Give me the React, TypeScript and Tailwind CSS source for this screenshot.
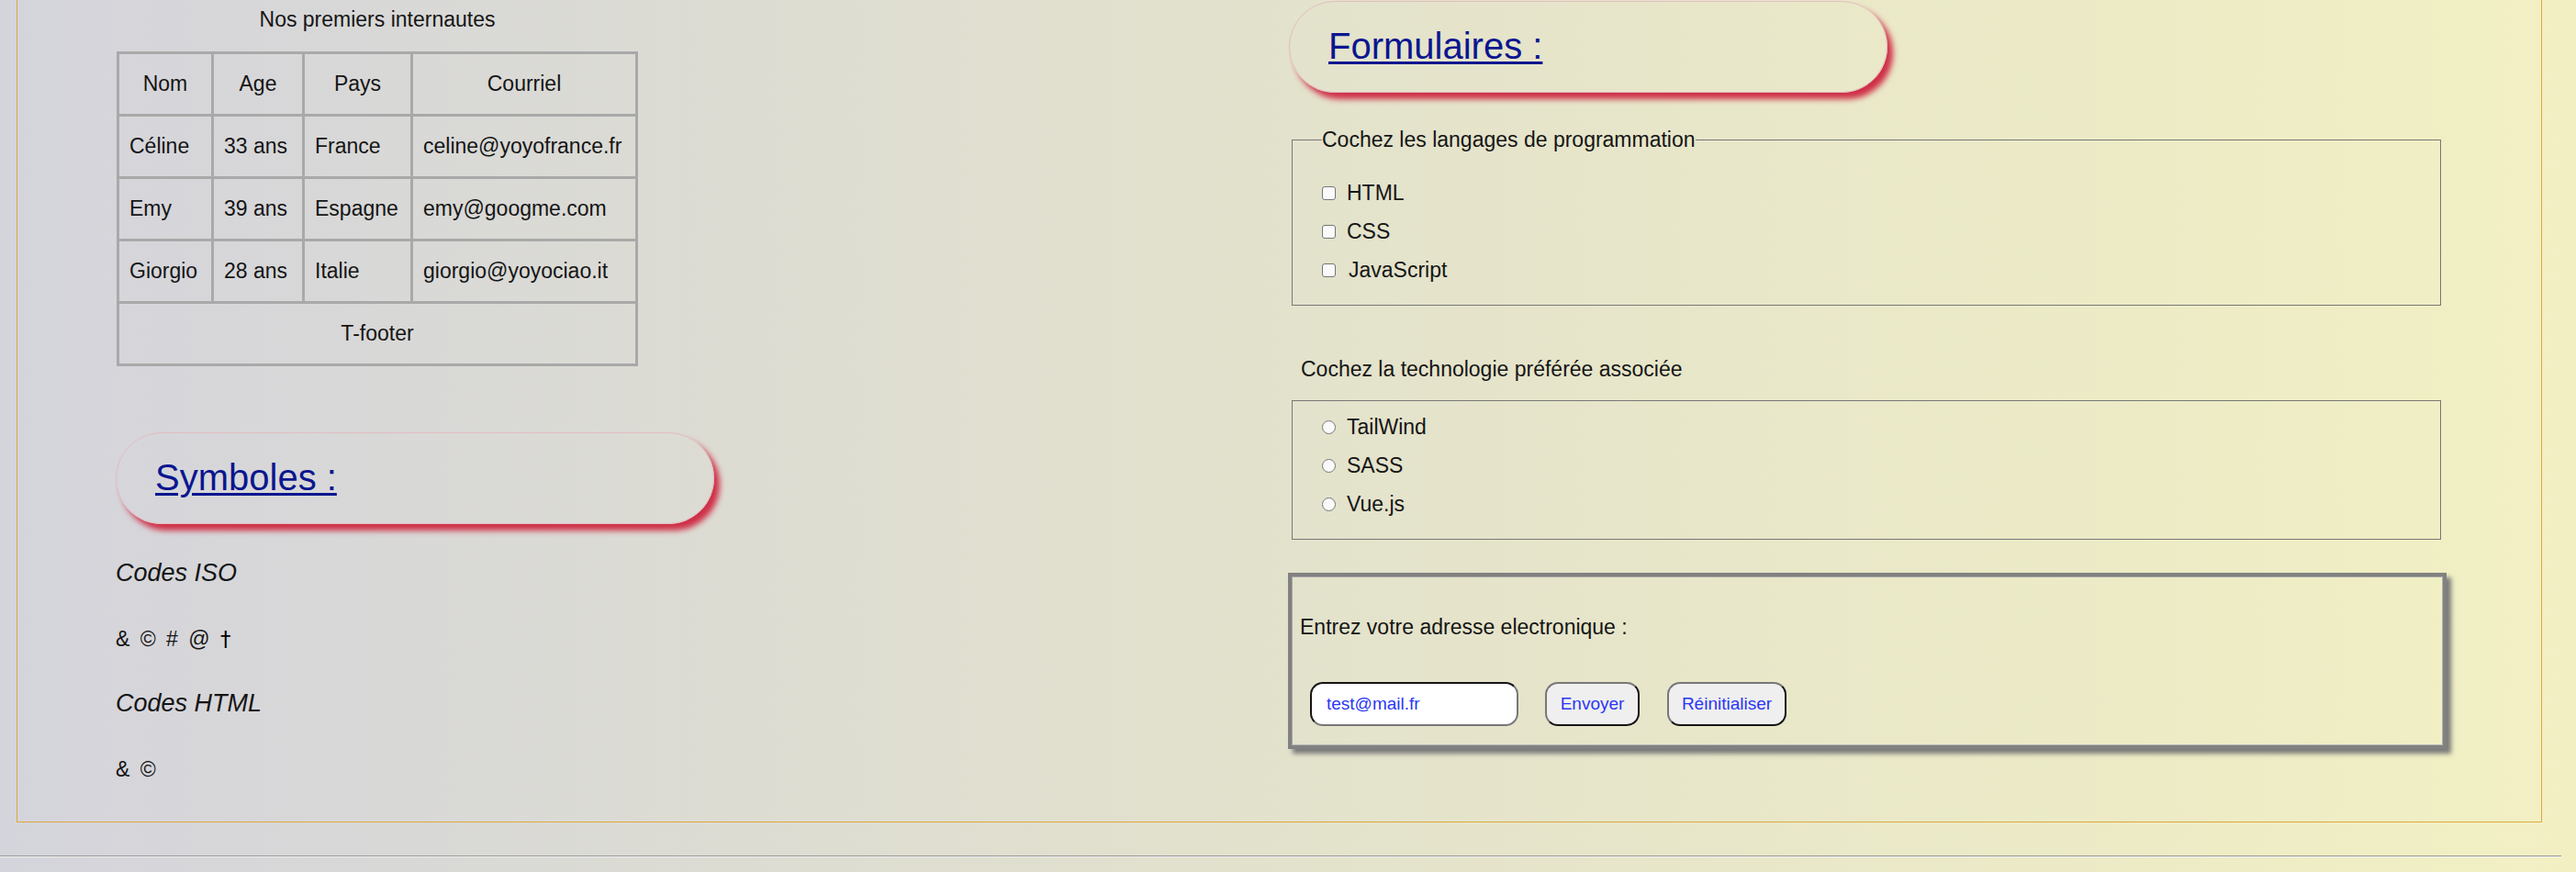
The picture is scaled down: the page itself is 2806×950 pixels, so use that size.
import React from "react";

const Pill = ({ label }: { label: string }) => (
  <div className="w-[652px] h-[100px] rounded-full border border-[#e3bcc1] shadow-[6px_7px_6px_#cf3047] pl-[42px] pt-[28px]">
    <a
      href="#"
      className="block w-max text-[40px] leading-[40px] text-[#0b168f] underline decoration-[3px] underline-offset-[3px]"
    >
      {label}
    </a>
  </div>
);

const Cell = ({
  w,
  children,
  head,
}: {
  w: string;
  children: React.ReactNode;
  head?: boolean;
}) => (
  <div
    className={
      "h-[68px] border-r-[3px] border-b-[3px] border-[#a9a9a9] flex items-center " +
      (head ? "justify-center " : "pl-[11px] ") +
      w
    }
  >
    {children}
  </div>
);

const rows = [
  ["Céline", "33 ans", "France", "celine@yoyofrance.fr"],
  ["Emy", "39 ans", "Espagne", "emy@googme.com"],
  ["Giorgio", "28 ans", "Italie", "giorgio@yoyociao.it"],
];

const widths = ["w-[103px]", "w-[99px]", "w-[118px]", "w-[245px]"];

const Check = ({ label, extra }: { label: string; extra?: string }) => (
  <div className="h-[42px] flex items-center">
    <span className="w-[15px] h-[15px] rounded-[3px] border border-[#767676] bg-[#fafafa] shrink-0" />
    <span className={"ml-[12px] leading-[30px] " + (extra ?? "")}>{label}</span>
  </div>
);

const Radio = ({ label }: { label: string }) => (
  <div className="h-[42px] flex items-center">
    <span className="w-[15px] h-[15px] rounded-full border border-[#767676] bg-[#fafafa] shrink-0" />
    <span className="ml-[12px] leading-[30px]">{label}</span>
  </div>
);

export default function App() {
  return (
    <div className="h-[950px] w-full overflow-hidden bg-[linear-gradient(to_right,#d4d4dc,#e3e2cc_50%,#f2f0c3)] font-['Liberation_Sans',Arial,sans-serif] text-[23px] text-[#151515]">
      <div className="ml-[18px] w-[2751px] h-[896px] border-x border-b border-[#dfa93b] flex">
        {/* Left column */}
        <div className="w-[1384px] shrink-0 pl-[107px]">
          <div className="ml-[1px] w-[568px] h-[42px] leading-[42px] text-center">
            Nos premiers internautes
          </div>
          <div className="mt-[14px] ml-[1px] w-max border-l-[3px] border-t-[3px] border-[#a9a9a9]">
            <div className="flex">
              {["Nom", "Age", "Pays", "Courriel"].map((h, i) => (
                <Cell key={h} w={widths[i]} head>
                  {h}
                </Cell>
              ))}
            </div>
            {rows.map((r) => (
              <div className="flex" key={r[0]}>
                {r.map((c, i) => (
                  <Cell key={i} w={widths[i]}>
                    {c}
                  </Cell>
                ))}
              </div>
            ))}
            <div className="flex">
              <Cell w="w-[565px]" head>
                T-footer
              </Cell>
            </div>
          </div>

          <div className="mt-[72px]">
            <Pill label="Symboles :" />
          </div>

          <h3 className="mt-[33px] h-[40px] leading-[40px] text-[27px] italic">Codes ISO</h3>
          <p className="mt-[32px] h-[40px] leading-[40px] [word-spacing:5px]">
            &amp; © # @ <span className="font-['DejaVu_Sans'] text-[#000]">†</span>
          </p>
          <h3 className="mt-[30px] h-[40px] leading-[40px] text-[27px] italic">Codes HTML</h3>
          <p className="mt-[32px] h-[40px] leading-[40px] [word-spacing:5px]">&amp; ©</p>
        </div>

        {/* Right column */}
        <div className="flex-1">
          <div className="ml-[1px] mt-[1px]">
            <Pill label="Formulaires :" />
          </div>

          <fieldset className="ml-[4px] mt-[36px] w-[1252px] border border-[#777777] pl-[32px] pt-[22px] pb-[17px]">
            <legend className="h-[30px] leading-[30px] p-0">
              Cochez les langages de programmation
            </legend>
            <Check label="HTML" />
            <Check label="CSS" />
            <Check label="JavaScript" extra="ml-[14px]" />
          </fieldset>

          <p className="ml-[14px] mt-[54px] h-[30px] leading-[30px]">
            Cochez la technologie préférée associée
          </p>

          <div className="ml-[4px] mt-[19px] w-[1252px] border border-[#777777] pl-[32px] pt-[7px] pb-[17px]">
            <Radio label="TailWind" />
            <Radio label="SASS" />
            <Radio label="Vue.js" />
          </div>

          <div className="mt-[36px] w-[1262px] border-[4px] border-[#818181] shadow-[5px_5px_5px_#787878,inset_-1px_-1px_0_#b5b5b5,inset_1px_1px_0_#a5a5a5] pl-[9px] pb-[21px]">
            <p className="mt-[40px] h-[30px] leading-[30px]">Entrez votre adresse electronique :</p>
            <div className="mt-[45px] ml-[11px] flex items-center">
              <input
                readOnly
                value="test@mail.fr"
                className="w-[227px] h-[48px] rounded-[14px] border-2 border-t-[#151515] border-l-[#151515] border-b-[#777777] border-r-[#777777] bg-white pl-[16px] text-[19px] text-[#2a36f5] outline-none font-['Liberation_Sans',Arial,sans-serif]"
              />
              <button className="ml-[29px] w-[103px] h-[48px] rounded-[14px] border-2 border-t-[#777777] border-l-[#777777] border-b-[#151515] border-r-[#151515] bg-[#efefef] text-[19px] text-[#2a36f5]">
                Envoyer
              </button>
              <button className="ml-[30px] w-[130px] h-[48px] rounded-[14px] border-2 border-t-[#777777] border-l-[#777777] border-b-[#151515] border-r-[#151515] bg-[#efefef] text-[19px] text-[#2a36f5]">
                Réinitialiser
              </button>
            </div>
          </div>
        </div>
      </div>
      <div className="mt-[36px] w-[2790px] h-[2px] border-t border-t-[#9a9a9a] border-b border-b-[#efefef]" />
    </div>
  );
}
